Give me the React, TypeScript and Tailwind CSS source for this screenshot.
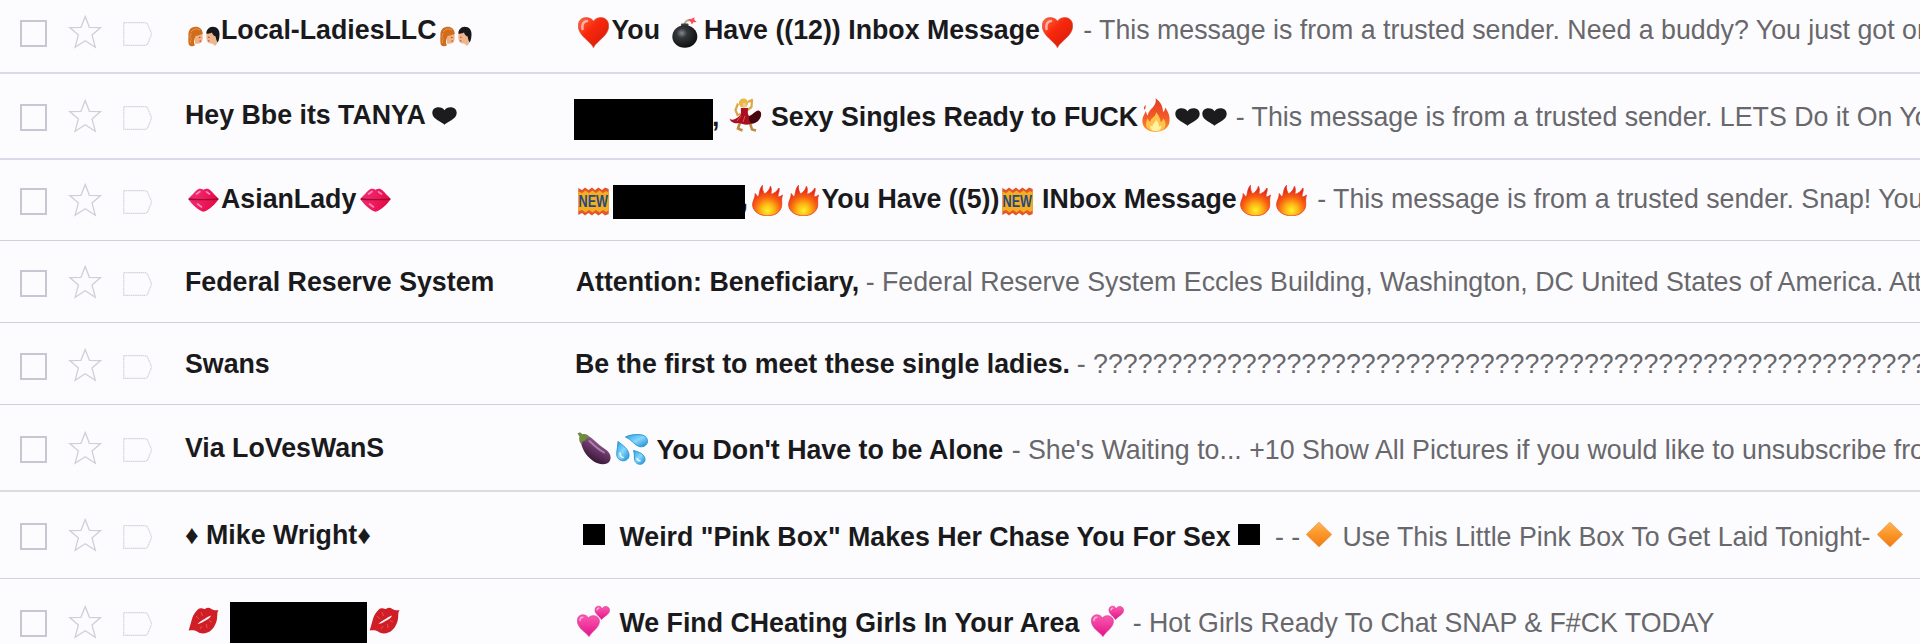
import type { ReactNode } from "react";

type ArtProps = { className?: string };

function RedHeart({ className = "" }: ArtProps) {
  return (
    <svg viewBox="0 0 31 31" className={`h-[31px] w-[31px] ${className}`}>
      <defs>
        <linearGradient id="rh" x1="0" y1="0" x2="1" y2="1">
          <stop offset="0" stopColor="#ff6a4a" />
          <stop offset="0.4" stopColor="#f8280c" />
          <stop offset="1" stopColor="#cf1a08" />
        </linearGradient>
      </defs>
      <path d="M15.500 30.800C13 24.500.3 19 .3 9 .3 3.500 3.800.6 8 .6c3.400 0 6 1.200 7.500 3.600C17 1.800 19.600.6 23 .6c4.200 0 7.700 2.900 7.700 8.400 0 10-12.700 15.500-15.200 21.800z" fill="url(#rh)" stroke="#d8452f" strokeWidth=".6" />
      <path d="M4.500 12C3.500 7 6 4 9 4" stroke="#ffc4b4" strokeWidth="2.600" fill="none" strokeLinecap="round" opacity=".85" />
    </svg>
  );
}

function Bomb({ className = "" }: ArtProps) {
  return (
    <svg viewBox="0 0 26 31" className={`h-[31px] w-[26px] ${className}`}>
      <defs>
        <radialGradient id="bm" cx=".38" cy=".35" r=".7">
          <stop offset="0" stopColor="#85898d" />
          <stop offset="0.3" stopColor="#34373a" />
          <stop offset="1" stopColor="#0c0c0d" />
        </radialGradient>
      </defs>
      <path d="M12.500 8.500C12.500 4.500 15 2.500 19 3.500" stroke="#b9a184" strokeWidth="1.800" fill="none" />
      <path d="M16 2l3.200 0L22.500.2l-.3 2.600 2.500 2.200-3.200.2-1.700 2.300-1-2.500z" fill="#ff4a5c" />
      <rect x="9" y="6.500" width="7.500" height="4.500" rx="1" fill="#3c3f42" />
      <ellipse cx="12.800" cy="19.500" rx="12.500" ry="11.300" fill="url(#bm)" />
    </svg>
  );
}

function Ladies({ className = "" }: ArtProps) {
  return (
    <svg viewBox="0 0 32 21" className={`h-[21px] w-[32px] ${className}`}>
      <path d="M6 7.500C9 6 13 6 14.300 8.500c.6 2.500.5 5-.3 7-1 2-4 2.500-7 2z" fill="#f0b183" />
      <path d="M14.800 8C14.500 3 11 .6 7.500.8 3 1 .4 4 .4 9c0 4-.3 8 .6 10 1.800 1.800 4.200 1.600 6 .3C6 17.500 5.500 15.500 6.500 13c.5-1.500.8-2.500 1.500-3.500 1.800.5 3.300 0 4.200-1 .7.300 1.800 0 2.600-.5z" fill="#cf6c1e" />
      <path d="M3 6c2-3 6-4 9-2M2 12c0-2 .4-4 1.500-5M2.500 17c-.3-1.500 0-3 .8-4.500" stroke="#eb9a4c" strokeWidth="1" fill="none" />
      <path d="M11 11.500h1.500M11.500 15h1.500" stroke="#a9452f" strokeWidth="1" />
      <path d="M18.500 7.500C21 6 26 5.500 28 8.500c.5 3 .2 5.500 1.200 8-.5 1.500-1 3-2.200 3.200-1.500-.3-1.500-2-3-2.200-2 0-4.500-.5-5-2.500-.8-2.500-.8-5-.5-7.500z" fill="#efb58c" />
      <path d="M18.300 7.500C18.500 3.500 21 .8 24.500.7 29 .6 32 4 31.500 9c-.2 3-.6 5.500-1.800 7.500-1.200-1.500-1.700-3.500-2-6C26 10 24.500 8.500 24 6.500c-1.500 1-4 1.500-5.700 1z" fill="#17181b" />
      <path d="M20 11.300h1.500M20 14.800h1.400" stroke="#a9452f" strokeWidth="1" />
    </svg>
  );
}

function InkHeart({ className = "" }: ArtProps) {
  return (
    <svg viewBox="0 0 25 18" className={`h-[18px] w-[25px] ${className}`}>
      <path d="M12.500 17.800C10.500 15 .3 12.500.3 6 .3 2.300 3 .2 6.400.2c2.800 0 5 .9 6.100 3C13.600 1.100 15.800.2 18.600.2c3.400 0 6.100 2.100 6.100 5.800 0 6.500-10.200 9-12.200 11.800z" fill="#1c1c1f" />
    </svg>
  );
}

function PinkLips({ className = "" }: ArtProps) {
  return (
    <svg viewBox="0 0 31 24" className={`h-[24px] w-[31px] ${className}`}>
      <defs>
        <linearGradient id="pl" x1="0" y1="0" x2="1" y2="0.300">
          <stop offset="0" stopColor="#e2306e" />
          <stop offset="0.350" stopColor="#f0246a" />
          <stop offset="1" stopColor="#e60a48" />
        </linearGradient>
      </defs>
      <path d="M.2 11C4 7.500 7.500 2.500 11 .8c1.600-.4 3.100 0 4.500 1C16.900.8 18.400.4 20 .8 23.500 2.500 27 7.500 30.800 11 27.500 15.500 21.500 22.500 15.500 23.700 9.500 22.500 3.500 15.500.2 11z" fill="url(#pl)" />
      <path d="M.8 11c5 .8 9.200.6 14.700.6s9.700.2 14.700-.6" stroke="#9c0c30" strokeWidth="1.300" fill="none" />
      <path d="M8.500 6L12 3.500M18.500 3.800l3 2.200M9.500 16l4 3" stroke="#ff8ab8" strokeWidth="1.600" strokeLinecap="round" />
    </svg>
  );
}

function KissMark({ className = "" }: ArtProps) {
  return (
    <svg viewBox="0 0 31 27" className={`h-[27px] w-[31px] ${className}`}>
      <path d="M.6 23.500C3 18 3.500 9 8 4.500 10 1.500 12 .5 14.500 1.500c1 .3 1.800.6 2.800.2 2-1.300 4-1.200 6 .2 2.300 1.300 4.500 1.300 7.200 1.300-1.700 2-1 5-1.500 8.800-1 6-4.500 11.500-9 13.200C16 27 12.500 27 9.500 24.800 6.500 22.800 3.500 23 .6 23.500z" fill="#d01e26" />
      <path d="M9.500 17c2-2.500 4.500-3.500 7-5 2-1.500 4-2.500 6.500-3.500-1 2.500-3 3.800-5.500 5-2.500 1.500-5 3-8 3.500z" fill="#fff5f2" />
      <path d="M8 9l3 3M13 5l1.500 4M12 22l2-3M19 21l-.5-4M24 15l-3-1.500" stroke="#e8504e" strokeWidth="1" />
    </svg>
  );
}

function Dancer({ className = "" }: ArtProps) {
  return (
    <svg viewBox="0 0 33 34" className={`h-[34px] w-[33px] ${className}`}>
      <path d="M9 5.500l-2.500 6.500 2 5 3-1M19 4l4-2-.5 7-4 3" stroke="#dca548" strokeWidth="2.200" fill="none" strokeLinejoin="round" />
      <path d="M11.500 23L9 30.500l4.500 2M20 22l3 9.500 4 1" stroke="#c08a40" strokeWidth="2.600" fill="none" />
      <path d="M.5 20.500C4 23.500 8 20 11.500 17c1-3 0-5 .5-7h7c0 3-.8 6 1 8 3.500-1 6-5 9-5.500 2.500 0 3.800 2.500 3 5.500-1.500 5-6 8-11 8-4 2-8-.5-11-1-4 1-8.500-.5-9.500-4.500z" fill="#a81022" />
      <path d="M20 18.500c3.500-1 6-5 9-5.500 2.500 0 3.500 2.500 2.700 5-1.500 5-5 7-9.200 7.500-2-1.500-3-4-2.500-7z" fill="#42080f" />
      <path d="M12 18l-4 5M16 18l-2 6" stroke="#e84c50" strokeWidth="1" />
      <circle cx="14.500" cy="5" r="4.600" fill="#e9b840" />
      <path d="M13.500 5c2-.5 3.500 0 4 1.500l-1 3h-2.500z" fill="#f4c696" />
    </svg>
  );
}

function TallFire({ className = "" }: ArtProps) {
  return (
    <svg viewBox="0 0 28 34" className={`h-[34px] w-[28px] ${className}`}>
      <defs>
        <linearGradient id="tf" x1="0" y1="0" x2="0" y2="1">
          <stop offset="0" stopColor="#e23a26" />
          <stop offset="0.550" stopColor="#f25a28" />
          <stop offset="1" stopColor="#ff9430" />
        </linearGradient>
      </defs>
      <path d="M13.500.3C19 4 21 9 21 14c1.500-.8 2.200-2.500 2-4.500 4 5 5 9.500 4.500 14C27 30 21 33.800 14 33.800S.8 30.500.4 24C0 19 2.500 16.500 3.800 13c.8 2 .8 3.500 2.200 4.500C6 11 15.500 9 13.500.3z" fill="url(#tf)" />
      <path d="M14 14c3 4 4.500 6.500 4.500 10 1.500-.5 2.300-1.500 3-3.500 2 3 2.500 5 1.800 7.500-1 4-5 5.300-9.300 5.300S5 31.500 4.200 27.500c-.4-3 .3-4.500 1.300-7 .8 1.600 1.500 2.500 3 3.300C8.500 19.500 14.500 18.500 14 14z" fill="#ffc24a" />
      <path d="M14 21.500c2.500 3 3 5 3 7 .8 0 1.500-.5 2-1.500.8 3-1 6-5 6s-6.500-2-5.500-6c.5 1 1.200 1.500 2 1.500 0-3 3.500-4 3.500-7z" fill="#fff3a0" />
      <path d="M2.500 12C1.500 10 2 8.500 3.500 7 4 9 3.500 10.500 2.500 12z" fill="#e8432a" />
    </svg>
  );
}

function Fire({ className = "" }: ArtProps) {
  return (
    <svg viewBox="0 0 31 31" className={`h-[31px] w-[31px] ${className}`}>
      <defs>
        <radialGradient id="fr" cx=".5" cy=".82" r=".72">
          <stop offset="0" stopColor="#fff02a" />
          <stop offset="0.300" stopColor="#ffb614" />
          <stop offset="0.600" stopColor="#f96412" />
          <stop offset="1" stopColor="#e62012" />
        </radialGradient>
      </defs>
      <path d="M10.500.3C10 4 11 6.500 12.500 9 15 7.500 17.500 5 18.500 1.200 20 4 19 7 19 9.500c3-1 6-3 8-6.500 1 3-1.500 6-1 9 1.500 0 3-.8 4.500-2-1.500 4-.5 7-.8 10.500C29 27 23 30.800 15.500 30.800 8 30.800 1.500 27 .6 20.500.2 16 3.500 13 3.200 8.500 4.500 10 5 11 6 12 8 9 7 4 10.500.3z" fill="url(#fr)" stroke="#e43a22" strokeWidth=".8" />
    </svg>
  );
}

function NewBadge({ className = "" }: ArtProps) {
  return (
    <svg viewBox="0 0 31 29" className={`h-[29px] w-[31px] ${className}`}>
      <path d="M.3 1l3.700 2L7 .4 10.500 3 14 .4l3 2.600L20.500.4 24 3 27 .4 30.700 2v25L27 28.600 24 26l-3.500 2.600L17 26l-3 2.600L10.500 26 7 28.600 4 26 .3 28z" fill="#e2562a" />
      <path d="M.3 4.500L4 6l3.500-2.500L11 6l3.500-2.500L18 6l3.500-2.500L25 6l3-2 2.700 1.500v18L28 25l-3-2-3.500 2.500L18 23l-3.500 2.500L11 23l-3.500 2.500L4 23 .3 24.500z" fill="#f6ad22" />
      <text x="0.500" y="20.300" fontFamily="Liberation Sans, sans-serif" fontWeight="700" fontSize="17" textLength="29.500" lengthAdjust="spacingAndGlyphs" fill="#244a80">NEW</text>
    </svg>
  );
}

function Eggplant({ className = "" }: ArtProps) {
  return (
    <svg viewBox="0 0 34 33" className={`h-[33px] w-[34px] ${className}`}>
      <defs>
        <linearGradient id="eg" x1=".7" y1="0.100" x2=".3" y2=".8">
          <stop offset="0" stopColor="#99689a" />
          <stop offset="0.500" stopColor="#6a3768" />
          <stop offset="1" stopColor="#3a1a38" />
        </linearGradient>
      </defs>
      <path d="M3.500 7C4 15 8 23 15.500 28.500c6.500 5 14.500 5 17.300.5 2.200-4.500-.3-9.500-4.800-12C22 13.500 18 8 11.500 4z" fill="url(#eg)" />
      <path d="M12.500 9c4 4 9 8.500 14.500 11.500" stroke="#bb92bf" strokeWidth="1.800" fill="none" strokeLinecap="round" opacity=".8" />
      <path d="M.5 1.500L3 .3l2.500 2C9 1.500 11.500 3 12.500 5.500c-1.500 0-2.500.5-3.500 1.500-.5 1.500-1 2-2 1.800C6 9 5 10.500 4.500 12.500 2.500 10.500 1.500 7 2.500 4.500z" fill="#6f8c3c" />
    </svg>
  );
}

function Droplets({ className = "" }: ArtProps) {
  return (
    <svg viewBox="0 0 32 31" className={`h-[31px] w-[32px] ${className}`}>
      <defs>
        <linearGradient id="dr" x1="0" y1="0" x2="1" y2="1">
          <stop offset="0" stopColor="#2a9fe0" />
          <stop offset="0.500" stopColor="#86d8fa" />
          <stop offset="1" stopColor="#1787d2" />
        </linearGradient>
      </defs>
      <path d="M9.500 3C14 .6 20 .2 25 .8c4.500.6 6.800 3.500 6.500 7-.5 4-5 6-9 4.500C18 10.500 15 5 9.500 3z" fill="url(#dr)" stroke="#2191d6" strokeWidth=".9" />
      <path d="M2 7.500C6.500 11 12.500 15 13 20.500c.2 4-2.500 6.500-6 6.300-4-.2-6.500-3.300-6.300-7.500.2-4 1.300-7.500 1.300-11.800z" fill="url(#dr)" stroke="#2191d6" strokeWidth=".9" />
      <path d="M17.500 16.500c4 1 9 2.500 11 6.500 1.500 3.500-.3 6.500-3.500 7.200-3.500.5-6-1.500-6.500-5-.4-3 .2-5.700-1-8.700z" fill="url(#dr)" stroke="#2191d6" strokeWidth=".9" />
      <path d="M4 19c0 2.500 1 4 3 4.500M21 24.500c.5 1.500 1.500 2.300 3 2.300" stroke="#e6f8ff" strokeWidth="1.500" fill="none" strokeLinecap="round" />
    </svg>
  );
}

function OrangeDiamond({ className = "" }: ArtProps) {
  return (
    <svg viewBox="0 0 26 25" className={`h-[25px] w-[26px] ${className}`}>
      <defs>
        <linearGradient id="od" x1="0" y1="0" x2="0" y2="1">
          <stop offset="0" stopColor="#fdb458" />
          <stop offset="0.500" stopColor="#fb9526" />
          <stop offset="1" stopColor="#f07c14" />
        </linearGradient>
      </defs>
      <path d="M12.500.5Q13 .1 13.500.5L25.300 12Q25.800 12.500 25.300 13L13.500 24.500Q13 24.900 12.500 24.500L.7 13Q.2 12.500.7 12z" fill="url(#od)" stroke="#e48a38" strokeWidth=".5" />
    </svg>
  );
}

function TwoHearts({ className = "" }: ArtProps) {
  return (
    <svg viewBox="0 0 33 32" className={`h-[32px] w-[33px] ${className}`}>
      <defs>
        <linearGradient id="th" x1="0" y1="0" x2="0" y2="1">
          <stop offset="0" stopColor="#fb5cb0" />
          <stop offset="1" stopColor="#e4128a" />
        </linearGradient>
      </defs>
      <path d="M12 31.600C9 27 .4 23.500.4 15.800c0-4 2.500-6 5.600-6 2.500 0 4.500 1.300 5.300 3.200 1.500-1.900 3.700-2.600 6-2.300 3.200.4 5.400 2.600 5.100 6.300-.6 6-7.700 9.600-10.400 14.600z" fill="url(#th)" stroke="#d62a8c" strokeWidth=".6" />
      <path d="M24.500 14.500C23 11.500 17.500 9 18 4.500c.3-2.500 2.200-3.600 4-3.300 1.600.2 2.700 1.300 3 2.600C26.200 2 27.700 1.300 29.300 1.500c2 .3 3.400 1.900 3.200 4.200-.4 4-5.700 5.600-8 8.800z" fill="url(#th)" stroke="#d62a8c" strokeWidth=".6" />
      <path d="M3 15.500c0-2 1.200-3.200 2.800-3.200M20 4.800c.2-1 .8-1.700 1.800-1.700" stroke="#ffb2da" strokeWidth="1.400" fill="none" strokeLinecap="round" />
    </svg>
  );
}

function StarOutline() {
  return (
    <svg viewBox="0 0 34 34" className="ml-[21px] -mt-[5px] h-[34px] w-[34px] shrink-0" fill="none">
      <path d="M17.200 1.500L21.400 12.300 32.600 12.600 24 20 27.300 32.200 17.200 25.800 7.100 32.200 10.400 20 1.800 12.600 13 12.300z" stroke="#cfcfd8" strokeWidth="1.300" />
    </svg>
  );
}

function LabelOutline() {
  return (
    <svg viewBox="0 0 29 24" className="ml-[21px] mt-[2px] h-[24px] w-[29px] shrink-0" fill="none">
      <path d="M.7.700H22Q24 .7 25 3L28.100 10.500Q28.700 12 28.100 13.500L25 21Q24 23.300 22 23.300H.7z" stroke="#d4d4de" strokeWidth="1.200" strokeDasharray="1.600 .5" />
    </svg>
  );
}

/** Fixed-width slot, so that the next piece starts at a known place. */
function Slot({ className, children }: { className: string; children?: ReactNode }) {
  return <span className={`block shrink-0 whitespace-pre ${className}`}>{children}</span>;
}

function Preview({ children }: { children: ReactNode }) {
  return <span className="block shrink-0 whitespace-pre pl-[0.700px] font-normal text-[#68686c]">{children}</span>;
}

type Mail = {
  row: string;
  tools: string;
  senderTop: string;
  subjectTop: string;
  sender: ReactNode;
  subject: ReactNode;
};

const mails: Mail[] = [
  {
    row: "h-[74px] border-b-2 border-[#dadaea]",
    tools: "mt-[20px]",
    senderTop: "mt-[15px]",
    subjectTop: "mt-[15px]",
    sender: (
      <>
        <Slot className="w-[36px]"><Ladies className="ml-[3px] mt-[11px]" /></Slot>
        <Slot className="w-[216px]">Local-LadiesLLC</Slot>
        <Slot className="w-[36px]"><Ladies className="ml-[3px] mt-[11px]" /></Slot>
      </>
    ),
    subject: (
      <>
        <Slot className="w-[36.5px]"><RedHeart className="ml-[3px] mt-[2px]" /></Slot>
        <Slot className="w-[58px]">You</Slot>
        <Slot className="w-[34.5px]"><Bomb className="ml-[2px] mt-[2px]" /></Slot>
        <Slot className="w-[338px]">Have ((12)) Inbox Message</Slot>
        <Slot className="w-[40.5px]"><RedHeart className="mt-[2px]" /></Slot>
        <Preview>- This message is from a trusted sender. Need a buddy? You just got one</Preview>
      </>
    ),
  },
  {
    row: "h-[86px] border-b-2 border-[#dadaea]",
    tools: "mt-[30px]",
    senderTop: "mt-[26px]",
    subjectTop: "mt-[28px]",
    sender: (
      <>
        <Slot className="w-[247px]">Hey Bbe its TANYA</Slot>
        <Slot className="w-[26px]"><InkHeart className="mt-[7px]" /></Slot>
      </>
    ),
    subject: (
      <>
        <Slot className="w-[137px]"><span className="-ml-[1px] -mt-[3px] block h-[41px] w-[138.5px] bg-black" /></Slot>
        <Slot className="w-[17px]">,</Slot>
        <Slot className="w-[42px]"><Dancer className="-mt-[4px]" /></Slot>
        <Slot className="w-[371px]">Sexy Singles Ready to FUCK</Slot>
        <Slot className="w-[33px]"><TallFire className="-mt-[4px]" /></Slot>
        <Slot className="w-[26.5px]"><InkHeart className="mt-[6px]" /></Slot>
        <Slot className="w-[33.5px]"><InkHeart className="mt-[6px]" /></Slot>
        <Preview>- This message is from a trusted sender. LETS Do it On Your</Preview>
      </>
    ),
  },
  {
    row: "h-[81px] border-b border-[#d0d0d8]",
    tools: "mt-[28px]",
    senderTop: "mt-[24px]",
    subjectTop: "mt-[24px]",
    sender: (
      <>
        <Slot className="w-[36px]"><PinkLips className="ml-[3px] mt-[4px]" /></Slot>
        <Slot className="w-[136px]">AsianLady</Slot>
        <Slot className="w-[36px]"><PinkLips className="ml-[3px] mt-[4px]" /></Slot>
      </>
    ),
    subject: (
      <>
        <Slot className="w-[37.500px]"><NewBadge className="ml-[3px] mt-[3px]" /></Slot>
        <Slot className="relative z-10 w-[128px]"><span className="mt-[1px] block h-[34px] w-[132.5px] bg-black" /></Slot>
        <Slot className="w-[11px]">,</Slot>
        <Slot className="w-[36.5px]"><Fire className="mt-[1px]" /></Slot>
        <Slot className="w-[33.5px]"><Fire className="mt-[1px]" /></Slot>
        <Slot className="w-[180.500px]">You Have ((5))</Slot>
        <Slot className="w-[40px]"><NewBadge className="mt-[3px]" /></Slot>
        <Slot className="w-[198px]">INbox Message</Slot>
        <Slot className="w-[36px]"><Fire className="mt-[1px]" /></Slot>
        <Slot className="w-[40.500px]"><Fire className="mt-[1px]" /></Slot>
        <Preview>- This message is from a trusted sender. Snap! You just</Preview>
      </>
    ),
  },
  {
    row: "h-[82px] border-b border-[#d0d0d6]",
    tools: "mt-[29px]",
    senderTop: "mt-[26px]",
    subjectTop: "mt-[26px]",
    sender: "Federal Reserve System",
    subject: (
      <>
        <Slot className="w-[290px] pl-[0.700px]">Attention: Beneficiary,</Slot>
        <Preview>- Federal Reserve System Eccles Building, Washington, DC United States of America. Attention</Preview>
      </>
    ),
  },
  {
    row: "h-[82px] border-b border-[#d0d0d8]",
    tools: "mt-[30px]",
    senderTop: "mt-[26px]",
    subjectTop: "mt-[26px]",
    sender: "Swans",
    subject: (
      <>
        <Slot className="w-[501px]">Be the first to meet these single ladies.</Slot>
        <Preview>- {"?".repeat(60)}</Preview>
      </>
    ),
  },
  {
    row: "h-[87px] border-b-2 border-[#dcdcdc]",
    tools: "mt-[31px]",
    senderTop: "mt-[28px]",
    subjectTop: "mt-[30px]",
    sender: "Via LoVesWanS",
    subject: (
      <>
        <Slot className="w-[41px]"><Eggplant className="ml-[2px] -mt-[3px]" /></Slot>
        <Slot className="w-[40.5px]"><Droplets className="-mt-[1px]" /></Slot>
        <Slot className="w-[354.500px]">You Don't Have to be Alone</Slot>
        <Preview>- She's Waiting to... +10 Show All Pictures if you would like to unsubscribe from</Preview>
      </>
    ),
  },
  {
    row: "h-[87px] border-b border-[#d3d3dc]",
    tools: "mt-[31px]",
    senderTop: "mt-[28px]",
    subjectTop: "mt-[30px]",
    sender: "♦ Mike Wright♦",
    subject: (
      <>
        <Slot className="w-[44.5px]"><span className="ml-[8px] mt-[2px] block h-[21px] w-[22px] bg-black" /></Slot>
        <Slot className="w-[618.500px]">Weird "Pink Box" Makes Her Chase You For Sex</Slot>
        <Slot className="w-[37px]"><span className="mt-[2px] block h-[21px] w-[22px] bg-black" /></Slot>
        <Slot className="w-[30.500px] font-normal text-[#68686c]">- -</Slot>
        <Slot className="w-[37px]"><OrangeDiamond /></Slot>
        <Slot className="w-[534.500px] font-normal text-[#68686c]">Use This Little Pink Box To Get Laid Tonight-</Slot>
        <Slot className="w-[26px]"><OrangeDiamond /></Slot>
      </>
    ),
  },
  {
    row: "h-[65px]",
    tools: "mt-[31px]",
    senderTop: "mt-[28px]",
    subjectTop: "mt-[29px]",
    sender: (
      <>
        <Slot className="w-[45px]"><KissMark className="ml-[3px]" /></Slot>
        <Slot className="w-[139px]"><span className="-mt-[5px] block h-[41px] w-[137px] bg-black" /></Slot>
        <Slot className="w-[31px]"><KissMark /></Slot>
      </>
    ),
    subject: (
      <>
        <Slot className="w-[44.5px]"><TwoHearts className="ml-[2px] -mt-[3px]" /></Slot>
        <Slot className="w-[471px]">We Find CHeating Girls In Your Area</Slot>
        <Slot className="w-[41.500px]"><TwoHearts className="-mt-[3px]" /></Slot>
        <Preview>- Hot Girls Ready To Chat SNAP &amp; F#CK TODAY</Preview>
      </>
    ),
  },
];

function MailRow({ mail }: { mail: Mail }) {
  return (
    <li className={`flex items-start overflow-hidden ${mail.row}`}>
      <div className={`flex w-[185px] shrink-0 items-start pl-[20px] ${mail.tools}`}>
        <span className="block h-[27px] w-[27px] shrink-0 border-2 border-[#c6c6d4]" />
        <StarOutline />
        <LabelOutline />
      </div>
      <div className={`flex w-[390px] shrink-0 items-start whitespace-pre ${mail.senderTop}`}>{mail.sender}</div>
      <div className={`flex min-w-0 flex-1 items-start ${mail.subjectTop}`}>{mail.subject}</div>
    </li>
  );
}

export default function App() {
  return (
    <ul className="h-[644px] w-[1920px] overflow-hidden bg-[#fcfcfe] font-['Liberation_Sans',Arial,sans-serif] text-[26.75px] leading-[30px] font-bold text-[#1a1a1d]">
      {mails.map((mail, i) => (
        <MailRow key={i} mail={mail} />
      ))}
    </ul>
  );
}
